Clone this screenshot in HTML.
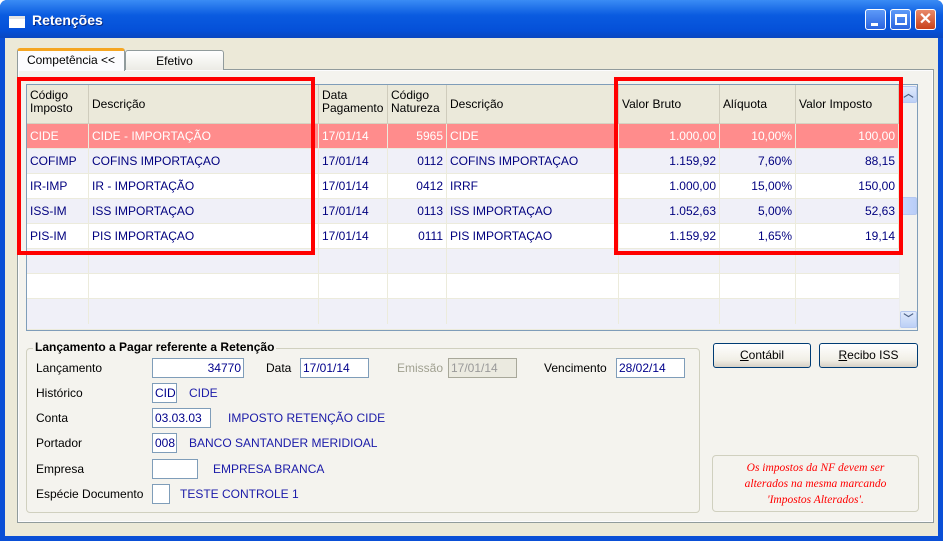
<!DOCTYPE html>
<html><head><meta charset="utf-8"><style>
*{margin:0;padding:0;box-sizing:border-box}
body{width:943px;height:541px;position:relative;overflow:hidden;font-family:"Liberation Sans",Tahoma,sans-serif;font-size:12px;background:#fff}
.a{position:absolute}
.win{left:0;top:0;width:943px;height:541px;background:#0a4fd6;border-radius:7px 7px 0 0}
.title{left:0;top:0;width:943px;height:38px;background:linear-gradient(#3a8cf5,#0a5be0 40%,#0550d8 80%,#0a47c0);border-radius:7px 7px 0 0}
.client{left:5px;top:38px;width:933px;height:498px;background:#ece9d8}
.tb{top:9px;width:21px;height:21px;border:1px solid #fff;border-radius:3px;background:linear-gradient(#5d9af8,#2a64e0)}
.grid{left:26px;top:84px;width:892px;height:247px;background:#fff;border:1px solid #7f9db9}
.hdr{left:0;top:0;height:39px;background:#ebe9da;border-bottom:1px solid #d6d2c2}
.h{position:absolute;top:0;height:39px;line-height:13px;padding:4px 0 0 3px;color:#000;border-right:1px solid #cfccbc}
.row{position:absolute;left:0;width:872px;height:25px;border-bottom:1px solid #ecebdc}
.c{position:absolute;top:0;height:25px;line-height:24px;padding:0 3px;color:#00007f;white-space:nowrap;border-right:1px solid #ecebdc}
.r{text-align:right}
.sel .c{color:#fff}
.lbl{color:#000}
.inp{background:#fff;border:1px solid #7f9db9;height:20px;line-height:18px;padding:0 2px;color:#00008b}
.blue{color:#1a1aa8}
.btn{height:25px;border:1px solid #003c74;border-radius:3px;background:linear-gradient(#fff,#f1efe6 70%,#d6d0c5);text-align:center;line-height:22px;color:#000}
.red{border:4px solid #f00}
</style></head><body>
<div class="a win"></div>
<div class="a title"></div>
<div class="a" style="left:9px;top:16px;width:16px;height:12px;background:#fff;border-top:3px solid #e4e4e4"></div>
<div class="a" style="left:32px;top:12px;color:#fff;font-weight:bold;font-size:14px;text-shadow:1px 1px #0a2a80">Retenções</div>
<div class="a tb" style="left:865px"><div class="a" style="left:5px;top:13px;width:7px;height:3px;background:#fff"></div></div>
<div class="a tb" style="left:890px"><div class="a" style="left:4px;top:4px;width:12px;height:11px;border:2px solid #fff;border-top-width:3px"></div></div>
<div class="a tb" style="left:915px;background:linear-gradient(#e88a6a,#c9421c)"><div class="a" style="left:0;top:-1px;width:19px;text-align:center;color:#fff;font-size:16px;font-weight:bold">✕</div></div>
<div class="a client"></div>
<div class="a" style="left:17px;top:69px;width:917px;height:454px;background:#fcfcfe;border:1px solid #919b9c"></div>
<div class="a" style="left:17px;top:48px;width:108px;height:24px;background:#fcfcfe;border:1px solid #919b9c;border-bottom:none;border-top:3px solid #f5a623;border-radius:3px 3px 0 0;text-align:center;line-height:18px">Competência &lt;&lt;</div>
<div class="a" style="left:125px;top:50px;width:99px;height:20px;background:linear-gradient(#fff,#ecebe5);border:1px solid #919b9c;border-bottom:none;border-radius:3px 3px 0 0;text-align:center;line-height:20px">Efetivo</div>
<div class="a" style="left:19px;top:71px;width:913px;height:450px;background:#f4f3ee"></div>
<div class="a grid">
 <div class="a hdr" style="width:872px">
  <div class="h" style="left:0;width:62px">Código<br>Imposto</div>
  <div class="h" style="left:62px;width:230px;padding-top:13px">Descrição</div>
  <div class="h" style="left:292px;width:69px">Data<br>Pagamento</div>
  <div class="h" style="left:361px;width:59px">Código<br>Natureza</div>
  <div class="h" style="left:420px;width:172px;padding-top:13px">Descrição</div>
  <div class="h" style="left:592px;width:101px;padding-top:13px">Valor Bruto</div>
  <div class="h" style="left:693px;width:76px;padding-top:13px">Alíquota</div>
  <div class="h" style="left:769px;width:103px;padding-top:13px">Valor Imposto</div>
 </div>
 <div class="row sel" style="top:39px;background:#ff8c8c"><div class="c" style="left:0;width:62px">CIDE</div><div class="c" style="left:62px;width:230px">CIDE - IMPORTAÇÃO</div><div class="c" style="left:292px;width:69px">17/01/14</div><div class="c r" style="left:361px;width:59px">5965</div><div class="c" style="left:420px;width:172px">CIDE</div><div class="c r" style="left:592px;width:101px">1.000,00</div><div class="c r" style="left:693px;width:76px">10,00%</div><div class="c r" style="left:769px;width:103px">100,00</div></div>
 <div class="row" style="top:64px;background:#f0f0f8"><div class="c" style="left:0;width:62px">COFIMP</div><div class="c" style="left:62px;width:230px">COFINS IMPORTAÇAO</div><div class="c" style="left:292px;width:69px">17/01/14</div><div class="c r" style="left:361px;width:59px">0112</div><div class="c" style="left:420px;width:172px">COFINS IMPORTAÇAO</div><div class="c r" style="left:592px;width:101px">1.159,92</div><div class="c r" style="left:693px;width:76px">7,60%</div><div class="c r" style="left:769px;width:103px">88,15</div></div>
 <div class="row" style="top:89px;background:#fff"><div class="c" style="left:0;width:62px">IR-IMP</div><div class="c" style="left:62px;width:230px">IR - IMPORTAÇÃO</div><div class="c" style="left:292px;width:69px">17/01/14</div><div class="c r" style="left:361px;width:59px">0412</div><div class="c" style="left:420px;width:172px">IRRF</div><div class="c r" style="left:592px;width:101px">1.000,00</div><div class="c r" style="left:693px;width:76px">15,00%</div><div class="c r" style="left:769px;width:103px">150,00</div></div>
 <div class="row" style="top:114px;background:#f0f0f8"><div class="c" style="left:0;width:62px">ISS-IM</div><div class="c" style="left:62px;width:230px">ISS IMPORTAÇAO</div><div class="c" style="left:292px;width:69px">17/01/14</div><div class="c r" style="left:361px;width:59px">0113</div><div class="c" style="left:420px;width:172px">ISS IMPORTAÇAO</div><div class="c r" style="left:592px;width:101px">1.052,63</div><div class="c r" style="left:693px;width:76px">5,00%</div><div class="c r" style="left:769px;width:103px">52,63</div></div>
 <div class="row" style="top:139px;background:#fff"><div class="c" style="left:0;width:62px">PIS-IM</div><div class="c" style="left:62px;width:230px">PIS IMPORTAÇAO</div><div class="c" style="left:292px;width:69px">17/01/14</div><div class="c r" style="left:361px;width:59px">0111</div><div class="c" style="left:420px;width:172px">PIS IMPORTAÇAO</div><div class="c r" style="left:592px;width:101px">1.159,92</div><div class="c r" style="left:693px;width:76px">1,65%</div><div class="c r" style="left:769px;width:103px">19,14</div></div>
 <div class="row" style="top:164px;background:#f0f0f8"><div class="c" style="left:0;width:62px"></div><div class="c" style="left:62px;width:230px"></div><div class="c" style="left:292px;width:69px"></div><div class="c" style="left:361px;width:59px"></div><div class="c" style="left:420px;width:172px"></div><div class="c" style="left:592px;width:101px"></div><div class="c" style="left:693px;width:76px"></div></div>
 <div class="row" style="top:189px;background:#fff"><div class="c" style="left:0;width:62px"></div><div class="c" style="left:62px;width:230px"></div><div class="c" style="left:292px;width:69px"></div><div class="c" style="left:361px;width:59px"></div><div class="c" style="left:420px;width:172px"></div><div class="c" style="left:592px;width:101px"></div><div class="c" style="left:693px;width:76px"></div></div>
 <div class="row" style="top:214px;background:#f0f0f8;height:31px"><div class="c" style="left:0;width:62px"></div><div class="c" style="left:62px;width:230px"></div><div class="c" style="left:292px;width:69px"></div><div class="c" style="left:361px;width:59px"></div><div class="c" style="left:420px;width:172px"></div><div class="c" style="left:592px;width:101px"></div><div class="c" style="left:693px;width:76px"></div></div>
 <div class="a" style="left:872px;top:0;width:18px;height:245px;background:#f3f3ef;border-left:1px solid #eee"></div>
 <div class="a" style="left:873px;top:1px;width:17px;height:17px;border:1px solid #b5c8f0;border-radius:2px;background:linear-gradient(#e0eafc,#bcd0f6);color:#4d6185;font-size:10px;text-align:center;line-height:15px;font-weight:bold">︿</div>
 <div class="a" style="left:873px;top:112px;width:17px;height:18px;border:1px solid #b5c8f0;border-radius:2px;background:linear-gradient(90deg,#c8d8fb,#b8cdf8)"></div>
 <div class="a" style="left:873px;top:226px;width:17px;height:17px;border:1px solid #b5c8f0;border-radius:2px;background:linear-gradient(#e0eafc,#bcd0f6);color:#4d6185;font-size:10px;text-align:center;line-height:15px;font-weight:bold">﹀</div>
</div>
<div class="a red" style="left:17px;top:77px;width:298px;height:178px"></div>
<div class="a red" style="left:614px;top:77px;width:289px;height:178px"></div>
<div class="a" style="left:26px;top:348px;width:674px;height:165px;border:1px solid #d0d0bf;border-radius:4px"></div>
<div class="a" style="left:33px;top:340px;padding:0 2px;background:#f4f3ee;font-weight:bold;color:#000">Lançamento a Pagar referente a Retenção</div>
<div class="a lbl" style="left:36px;top:361px">Lançamento</div>
<div class="a inp" style="left:152px;top:358px;width:92px;text-align:right">34770</div>
<div class="a lbl" style="left:266px;top:361px">Data</div>
<div class="a inp" style="left:300px;top:358px;width:69px">17/01/14</div>
<div class="a" style="left:397px;top:361px;color:#a0a090">Emissão</div>
<div class="a inp" style="left:448px;top:358px;width:69px;background:#ebeae0;color:#999;border-color:#a8a89a">17/01/14</div>
<div class="a lbl" style="left:544px;top:361px">Vencimento</div>
<div class="a inp" style="left:616px;top:358px;width:69px">28/02/14</div>
<div class="a lbl" style="left:36px;top:386px">Histórico</div>
<div class="a inp" style="left:152px;top:383px;width:25px">CID</div>
<div class="a blue" style="left:189px;top:386px">CIDE</div>
<div class="a lbl" style="left:36px;top:411px">Conta</div>
<div class="a inp" style="left:152px;top:408px;width:59px">03.03.03</div>
<div class="a blue" style="left:228px;top:411px">IMPOSTO RETENÇÃO CIDE</div>
<div class="a lbl" style="left:36px;top:436px">Portador</div>
<div class="a inp" style="left:152px;top:433px;width:25px">008</div>
<div class="a blue" style="left:189px;top:436px">BANCO SANTANDER MERIDIOAL</div>
<div class="a lbl" style="left:36px;top:462px">Empresa</div>
<div class="a inp" style="left:152px;top:459px;width:46px"></div>
<div class="a blue" style="left:213px;top:462px">EMPRESA BRANCA</div>
<div class="a lbl" style="left:36px;top:487px">Espécie Documento</div>
<div class="a inp" style="left:152px;top:484px;width:18px"></div>
<div class="a blue" style="left:180px;top:487px">TESTE CONTROLE 1</div>
<div class="a btn" style="left:713px;top:343px;width:98px"><u>C</u>ontábil</div>
<div class="a btn" style="left:819px;top:343px;width:99px"><u>R</u>ecibo ISS</div>
<div class="a" style="left:712px;top:455px;width:207px;height:57px;border:1px solid #d0d0bf;border-radius:4px;color:#f00;font-family:'Liberation Serif',serif;font-style:italic;font-size:11.5px;text-align:center;line-height:16px;padding-top:4px">Os impostos da NF devem ser<br>alterados na mesma marcando<br>'Impostos Alterados'.</div>
</body></html>
